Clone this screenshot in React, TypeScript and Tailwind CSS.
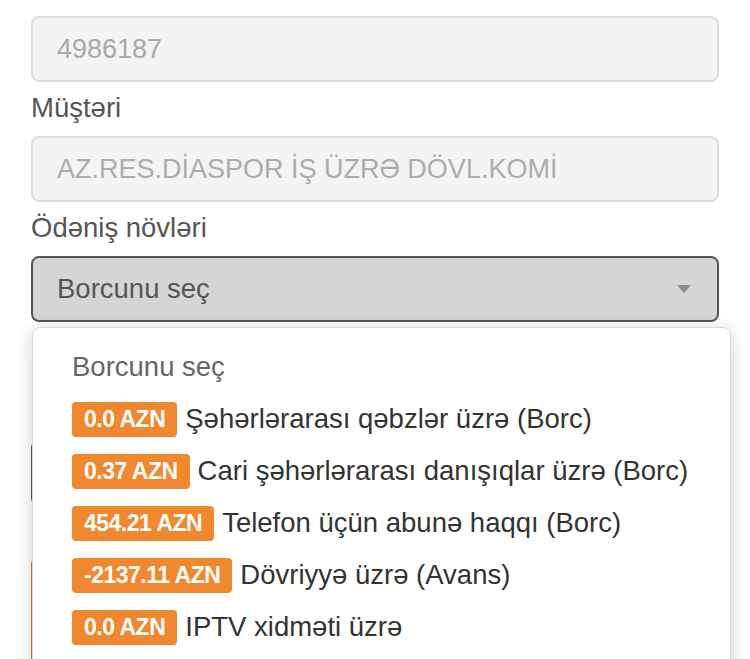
const DEBTS = [
  { amount: "0.0 AZN", label: "Şəhərlərarası qəbzlər üzrə (Borc)" },
  { amount: "0.37 AZN", label: "Cari şəhərlərarası danışıqlar üzrə (Borc)" },
  { amount: "454.21 AZN", label: "Telefon üçün abunə haqqı (Borc)" },
  { amount: "-2137.11 AZN", label: "Dövriyyə üzrə (Avans)" },
  { amount: "0.0 AZN", label: "IPTV xidməti üzrə" },
]

export default function App() {
  return (
    <div className="relative w-[750px] h-[659px] overflow-hidden bg-white font-['Liberation_Sans',Arial,sans-serif]">
      <div className="px-[31px] pt-[16px] flex flex-col">
        <div className="h-[66px] rounded-[8px] border-2 border-[#dcdcdc] bg-[#f4f4f4] px-[24px] flex items-center text-[27px] text-[#a9a9a9]">
          4986187
        </div>
        <div className="mt-[10px] mb-[12px] text-[27.5px] leading-[32px] text-[#555]">Müştəri</div>
        <div className="h-[66px] rounded-[8px] border-2 border-[#dcdcdc] bg-[#f4f4f4] px-[24px] flex items-center text-[27px] text-[#acacac]">
          AZ.RES.DİASPOR İŞ ÜZRƏ DÖVL.KOMİ
        </div>
        <div className="mt-[10px] mb-[12px] text-[27.5px] leading-[32px] text-[#555]">Ödəniş növləri</div>
        <div className="h-[66px] rounded-[8px] border-2 border-[#555] bg-[#d5d5d5] pl-[24px] pr-[26px] flex items-center justify-between text-[27.5px] text-[#555]">
          <span>Borcunu seç</span>
          <svg width="14" height="8" viewBox="0 0 14 8">
            <path d="M0 0 L14 0 L7 8 Z" fill="#8a8a8a" />
          </svg>
        </div>
        <div className="mt-[118px] h-[66px] rounded-[8px] border-2 border-[#555] bg-white" />
        <div className="mt-[50px] h-[110px] rounded-[8px] bg-[#e0782a]" />
      </div>

      <div className="absolute left-[32px] top-[327px] w-[699px] h-[360px] rounded-[8px] border border-[#d8d8d8] bg-white shadow-[0_4px_18px_rgba(0,0,0,0.18)] pl-[39px] pt-[13px]">
        <div className="h-[52px] flex items-center text-[27.5px] text-[#666]">Borcunu seç</div>
        {DEBTS.map((d, i) => (
          <div key={i} className="h-[52px] flex items-center gap-[8px]">
            <span className="h-[35px] px-[12px] rounded-[4px] bg-[#f0882f] text-white font-bold text-[23px] tracking-[-0.5px] flex items-center">
              {d.amount}
            </span>
            <span className="text-[27.5px] text-[#333]">{d.label}</span>
          </div>
        ))}
      </div>
    </div>
  )
}
